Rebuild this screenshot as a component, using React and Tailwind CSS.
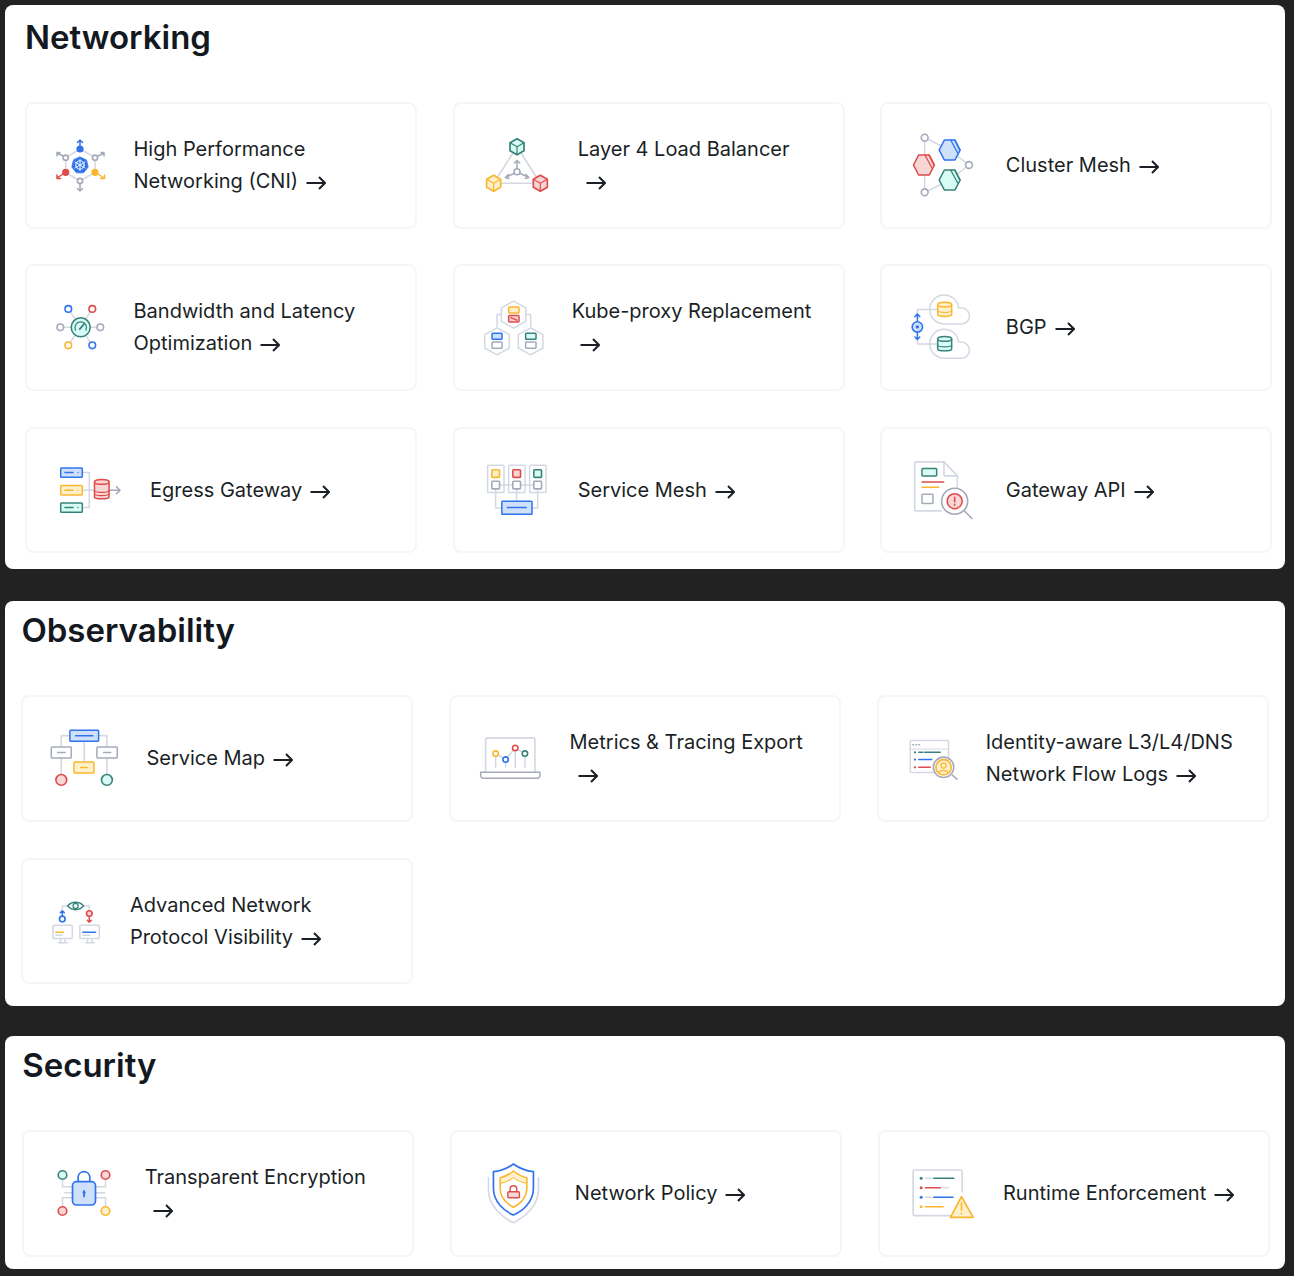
import React from 'react'

const BLUE = '#2f74ee'
const RED = '#df4b4b'
const YEL = '#fbb62f'
const GRN = '#37837a'
const GRY = '#a4aaba'
const LGT = '#d3d8e2'
const BLUE_F = '#cfe0fb'
const RED_F = '#f7d6d6'
const YEL_F = '#fff0cc'
const GRN_F = '#d8fbf6'

function Arrow() {
    return (
        <svg className="inline-block ml-2 align-[-2px]" width="20" height="14" viewBox="0 0 20 14" fill="none" stroke="#1b1f26" strokeWidth="2">
            <path d="M0.5 7H19M13 1l6 6-6 6"/>
        </svg>
    )
}

// icon svgs use page coordinates through their viewBox
function Icon({x, y, w, children}) {
    return (
        <svg className="shrink-0" width={w} height={123} viewBox={`${x} ${y} ${w} 123`} fill="none" strokeWidth="1.5" strokeLinecap="round" strokeLinejoin="round">
            {children}
        </svg>
    )
}

function Node({x, y, r = 3.3, c, f = '#fff', w = 1.6}) {
    return <circle cx={x} cy={y} r={r} stroke={c} fill={f} strokeWidth={w}/>
}

function Box({x, y, x2, y2, c, f = '#fff', w = 1.5, r = 0.8}) {
    return <rect x={x} y={y} width={x2 - x} height={y2 - y} rx={r} stroke={c} fill={f} strokeWidth={w}/>
}

function Ln({d, c = LGT, w = 1.5}) {
    return <path d={d} stroke={c} strokeWidth={w}/>
}

function Cube({x, y, c, f}) {
    const p = `${x},${y - 8} ${x + 7},${y - 4} ${x + 7},${y + 4} ${x},${y + 8} ${x - 7},${y + 4} ${x - 7},${y - 4}`
    return (
        <g>
            <polygon points={p} stroke={c} fill={f} strokeWidth="1.7"/>
            <path d={`M${x - 7} ${y - 4}L${x} ${y}L${x + 7} ${y - 4}M${x} ${y}V${y + 8}`} stroke={c} strokeWidth="1.2"/>
        </g>
    )
}

function Hex({x, y, c, f}) {
    const p = `${x - 10.5},${y} ${x - 5.3},${y - 10} ${x + 5.3},${y - 10} ${x + 10.5},${y} ${x + 5.3},${y + 10} ${x - 5.3},${y + 10}`
    return (
        <g>
            <polygon points={p} stroke={c} fill={f} strokeWidth="1.6"/>
            <path d={`M${x + 1} ${y - 10}L${x + 8} ${y + 3}M${x + 5} ${y - 10}L${x + 10} ${y}`} stroke={c} strokeWidth="1.3"/>
        </g>
    )
}

function Db({x, y, w = 7, h = 7, c, f}) {
    return (
        <g>
            <path d={`M${x - w} ${y - h + 2}V${y + h - 2}C${x - w} ${y + h + 0.5} ${x + w} ${y + h + 0.5} ${x + w} ${y + h - 2}V${y - h + 2}`} stroke={c} fill={f} strokeWidth="1.5"/>
            <ellipse cx={x} cy={y - h + 2} rx={w} ry="2.4" stroke={c} fill={f} strokeWidth="1.5"/>
            <path d={`M${x - w} ${y + 1}C${x - w} ${y + 3.5} ${x + w} ${y + 3.5} ${x + w} ${y + 1}`} stroke={c} strokeWidth="1.2"/>
        </g>
    )
}

function Cloud({y}) {
    return <path d={`M945 ${y + 14.3}H962A8 8 0 0 0 963 ${y - 1.6}L959 ${y - 1.8}A14.5 14.5 0 1 0 945 ${y + 14.3}Z`} stroke={LGT} fill="#fff" strokeWidth="1.5"/>
}

const icons = {
    cni: ({x, y, w}) => (
        <Icon x={x} y={y} w={w}>
            <polygon points="80,149 95,157.7 95,172.3 80,181 65.7,172.3 65.7,157.7" stroke={LGT}/>
            <path d="M80 146V140M77.5 142.5L80 140L82.5 142.5" stroke={BLUE}/>
            <path d="M63 156L57.5 153M60 152.5H57V156" stroke={GRY}/>
            <path d="M98 156L104 153M101 152.5H104V156" stroke={GRY}/>
            <path d="M98 174L104 178M100.5 178.5H104.5V175" stroke={YEL}/>
            <path d="M63 174L57 178M60.5 178.5H57V175" stroke={RED}/>
            <path d="M80 184V191M77.5 188.5L80 191L82.5 188.5" stroke={GRY}/>
            <Node x={80} y={149} r={2.8} c={BLUE} f={BLUE}/>
            <Node x={95} y={157.7} r={2.6} c={GRY}/>
            <Node x={95} y={172.3} r={2.8} c={YEL} f={YEL}/>
            <Node x={80} y={181} r={2.6} c={GRY}/>
            <Node x={65.7} y={172.3} r={2.8} c={RED} f={RED}/>
            <Node x={65.7} y={157.7} r={2.6} c={GRY}/>
            <polygon points="80,157 86.5,160 88.2,167 83.6,172.8 76.4,172.8 71.8,167 73.5,160" fill={BLUE} stroke={BLUE} strokeWidth="0.8"/>
            <circle cx="80" cy="165" r="4.2" stroke="#fff" strokeWidth="1"/>
            <path d="M80 159.5V170.5M75 162L85 168M85 162L75 168" stroke="#fff" strokeWidth="0.9"/>
        </Icon>
    ),
    l4: ({x, y, w}) => (
        <Icon x={x} y={y} w={w}>
            <polygon points="516.7,146.7 493.3,183.3 540,183.3" stroke={LGT} strokeWidth="1.6"/>
            <path d="M516.7 168V160.5M514 163L516.7 160.5L519.4 163" stroke={GRY}/>
            <path d="M513.5 173.5L505 177.5M508 174.5L505 177.5L508.5 178.5" stroke={GRY}/>
            <path d="M520 173.5L528.5 177.5M525.5 174.5L528.5 177.5L525 178.5" stroke={GRY}/>
            <Node x={516.7} y={171.7} r={3} c={GRY}/>
            <Cube x={516.7} y={146.7} c={GRN} f={GRN_F}/>
            <Cube x={493.3} y={183.3} c={YEL} f={YEL_F}/>
            <Cube x={540} y={183.3} c={RED} f={RED_F}/>
        </Icon>
    ),
    cluster: ({x, y, w}) => (
        <Icon x={x} y={y} w={w}>
            <Ln d="M925 137.7V192.3M925 137.7L950 150L969.3 165L950 180L925 192.3"/>
            <Node x={925} y={137.7} r={3.4} c={GRY}/>
            <Node x={969.3} y={165} r={3.4} c={GRY}/>
            <Node x={925} y={192.3} r={3.4} c={GRY}/>
            <Hex x={950} y={150} c={BLUE} f={BLUE_F}/>
            <Hex x={924.3} y={165} c={RED} f={RED_F}/>
            <Hex x={950} y={180} c={GRN} f={GRN_F}/>
        </Icon>
    ),
    bandwidth: ({x, y, w}) => (
        <Icon x={x} y={y} w={w}>
            <Ln d="M68.3 309.3L92.3 345.7M92.3 309.3L68.3 345.7M60.3 327.7H100.3"/>
            <Node x={68.3} y={309.3} c={BLUE}/>
            <Node x={92.3} y={309.3} c={RED}/>
            <Node x={60.3} y={327.7} c={GRY}/>
            <Node x={100.3} y={327.7} c={GRY}/>
            <Node x={68.3} y={345.7} c={YEL}/>
            <Node x={92.3} y={345.7} c={BLUE}/>
            <Node x={80.7} y={327.7} r={9.5} c={GRN} f={GRN_F}/>
            <path d="M75.5 330.5A5.8 5.8 0 1 1 86 330.5" stroke={GRN} strokeWidth="1.3"/>
            <path d="M79.7 329.5L84 324.5" stroke={GRN} strokeWidth="1.8"/>
        </Icon>
    ),
    kube: ({x, y, w}) => (
        <Icon x={x} y={y} w={w}>
            <Ln d="M501 315H496.7V327M525.5 315H530.3V327"/>
            <polygon points="513.3,301.5 525.5,308.3 525.5,321.7 513.3,328.5 501,321.7 501,308.3" stroke={LGT} fill="#fff"/>
            <polygon points="496.7,328.2 509,335 509,348.4 496.7,355.2 484.4,348.4 484.4,335" stroke={LGT} fill="#fff"/>
            <polygon points="530.3,328.2 542.6,335 542.6,348.4 530.3,355.2 518,348.4 518,335" stroke={LGT} fill="#fff"/>
            <Box x={508.3} y={307.3} x2={518.7} y2={313.3} c={YEL} f={YEL_F}/>
            <Box x={508.3} y={316} x2={518.7} y2={322.3} c={RED} f={RED_F}/>
            <path d="M510.5 318L516.5 320.5" stroke={RED}/>
            <Box x={491.7} y={333.7} x2={501.7} y2={339.7} c={BLUE} f={BLUE_F}/>
            <Box x={491.7} y={342.3} x2={501.7} y2={348.7} c={GRY}/>
            <Box x={525.3} y={333.7} x2={535.7} y2={339.7} c={GRN} f={GRN_F}/>
            <Box x={525.3} y={342.3} x2={535.7} y2={348.7} c={GRY}/>
        </Icon>
    ),
    bgp: ({x, y, w}) => (
        <Icon x={x} y={y} w={w}>
            <Cloud y={310}/>
            <Cloud y={344.3}/>
            <Ln d="M938 310H917.7V318M938 344.3H917.7V337"/>
            <Db x={945} y={310} c={YEL} f={YEL_F}/>
            <Db x={945} y={344.3} c={GRN} f={GRN_F}/>
            <path d="M917.7 322V314.5M915.3 317L917.7 314.5L920.1 317M917.7 333V340M915.3 337.5L917.7 340L920.1 337.5" stroke={BLUE}/>
            <Node x={917.7} y={327.3} r={5.2} c={BLUE} f={BLUE_F}/>
            <circle cx="917.7" cy="327.3" r="1.7" fill={BLUE}/>
        </Icon>
    ),
    egress: ({x, y, w}) => (
        <Icon x={x} y={y} w={w}>
            <Ln d="M82.3 472.3H89.3V507.3H82.3M82.3 490H95"/>
            <path d="M109.5 490H120M116.5 486.5L120 490L116.5 493.5" stroke={GRY} strokeWidth="1.6"/>
            <Box x={60.7} y={467.7} x2={82.3} y2={477} c={BLUE} f={BLUE_F}/>
            <Box x={60.7} y={485.3} x2={82.3} y2={494.7} c={YEL} f={YEL_F}/>
            <Box x={60.7} y={502.7} x2={82.3} y2={512} c={GRN} f={GRN_F}/>
            <path d="M65 472.3H73" stroke={BLUE}/><path d="M65 490H73" stroke={YEL}/><path d="M65 507.3H73" stroke={GRN}/>
            <circle cx="78" cy="472.3" r="0.7" fill={BLUE}/><circle cx="78" cy="490" r="0.7" fill={YEL}/><circle cx="78" cy="507.3" r="0.7" fill={GRN}/>
            <Db x={101.8} y={489.2} w={7.3} h={9.5} c={RED} f={RED_F}/>
            <path d="M94.5 493.5C94.5 496 109 496 109 493.5" stroke={RED} strokeWidth="1.2"/>
        </Icon>
    ),
    mesh: ({x, y, w}) => (
        <Icon x={x} y={y} w={w}>
            <Box x={487.3} y={465} x2={503.7} y2={492.3} c={LGT}/>
            <Box x={508.3} y={465} x2={524.7} y2={492.3} c={LGT}/>
            <Box x={529.3} y={465} x2={545.7} y2={492.3} c={LGT}/>
            <Ln d="M495.3 484.7H537.3M495.3 489V507.7H502M516.3 489V501M537.3 489V507.7H531"/>
            <Box x={491.5} y={469.5} x2={499.2} y2={477.2} c={YEL} f={YEL_F} w={1.6}/>
            <Box x={512.5} y={469.5} x2={520.2} y2={477.2} c={RED} f={RED_F} w={1.6}/>
            <Box x={533.5} y={469.5} x2={541.2} y2={477.2} c={GRN} f={GRN_F} w={1.6}/>
            <Box x={491.5} y={481} x2={499.2} y2={488.7} c={GRY} w={1.6}/>
            <Box x={512.5} y={481} x2={520.2} y2={488.7} c={GRY} w={1.6}/>
            <Box x={533.5} y={481} x2={541.2} y2={488.7} c={GRY} w={1.6}/>
            <Box x={501.5} y={501} x2={531.7} y2={514} c={BLUE} f={BLUE_F}/>
            <path d="M507 507.4H526" stroke={BLUE}/>
        </Icon>
    ),
    gateway: ({x, y, w}) => (
        <Icon x={x} y={y} w={w}>
            <path d="M957.7 488V475.7L944.3 461.7H916.5Q915 461.7 915 463.2V509Q915 510.7 916.5 510.7H941.5" stroke={LGT} strokeWidth="1.6"/>
            <path d="M944.3 461.7V474Q944.3 475.7 946 475.7H957.7" stroke={LGT} strokeWidth="1.6"/>
            <Box x={922.3} y={468.3} x2={937} y2={475.7} c={GRN} f={GRN_F}/>
            <path d="M922.3 481.7H944" stroke={RED}/>
            <path d="M922.3 487H939" stroke={YEL}/>
            <Box x={922.3} y={494} x2={933.3} y2={503.3} c={GRY}/>
            <path d="M965 511L972.3 518.3" stroke={GRY} strokeWidth="1.6"/>
            <Node x={955} y={501} r={13} c={GRY}/>
            <Node x={955} y={501} r={7.5} c={RED} f={RED_F}/>
            <path d="M955 497V501.5M955 504V505" stroke={RED} strokeWidth="1.6"/>
        </Icon>
    ),
    serviceMap: ({x, y, w}) => (
        <Icon x={x} y={y} w={w}>
            <Ln d="M70.3 736H61.7V747.3M99 736H107.3V747.3M84.7 741.7V762.3M61.7 758.3V775M107.3 758.3V775" w={1.6}/>
            <Box x={70.3} y={730.7} x2={99} y2={741.7} c={BLUE} f={BLUE_F}/>
            <path d="M76 736.2H93.3" stroke={BLUE}/>
            <Box x={51.7} y={747.3} x2={71.7} y2={758.3} c={GRY}/>
            <path d="M58 753H65.5" stroke={GRY}/>
            <Box x={97.3} y={747.3} x2={117.7} y2={758.3} c={GRY}/>
            <path d="M104 753H111" stroke={GRY}/>
            <Box x={74.3} y={762.3} x2={94.3} y2={773.3} c={YEL} f={YEL_F}/>
            <path d="M81 768H87.5" stroke={YEL}/>
            <Node x={61.7} y={780.3} r={5.4} c={RED} f={RED_F}/>
            <Node x={107.3} y={780.3} r={5.4} c={GRN} f={GRN_F}/>
        </Icon>
    ),
    metrics: ({x, y, w}) => (
        <Icon x={x} y={y} w={w}>
            <path d="M485.7 771.7V740Q485.7 738.3 487.4 738.3H533.3Q535 738.3 535 740V771.7" stroke={LGT} strokeWidth="1.6"/>
            <path d="M480.7 772.7H540V775.5Q540 778.7 537 778.7H484Q480.7 778.7 480.7 775.5Z" stroke={GRY} fill="#fff" strokeWidth="1.4"/>
            <Ln d="M495.7 754V767.7M505.7 760V767.7M515.3 748.3V767.7M525 754V767.7M495.7 754L505.7 760L515.3 748.3L525 754"/>
            <Node x={495.7} y={754} r={2.7} c={YEL}/>
            <Node x={505.7} y={760} r={2.7} c={BLUE}/>
            <Node x={515.3} y={748.3} r={2.7} c={RED}/>
            <Node x={525} y={754} r={2.7} c={GRN}/>
        </Icon>
    ),
    identity: ({x, y, w}) => (
        <Icon x={x} y={y} w={w}>
            <path d="M936 773H911Q910 773 910 772V742Q910 741 911 741H947.3Q948.3 741 948.3 742V757" stroke={LGT}/>
            <path d="M910 749.5H948.3" stroke={LGT} strokeWidth="1"/>
            <path d="M912.5 745.2H913.2M915.5 745.2H916.2M918.5 745.2H919.2" stroke={GRY}/>
            <circle cx="914.7" cy="752.7" r="1.1" fill={GRN}/><path d="M918.5 752.7H922.5M924.3 752.7H940" stroke={GRN}/>
            <circle cx="914.7" cy="760" r="1.1" fill={BLUE}/><path d="M918.5 760H931.5" stroke={BLUE}/>
            <circle cx="914.7" cy="767.7" r="1.1" fill={RED}/><path d="M918.5 767.7H930" stroke={RED}/>
            <path d="M952 775.5L956.7 779.5" stroke={GRY}/>
            <Node x={943.3} y={767.7} r={10.2} c={GRY}/>
            <Node x={943.3} y={767.7} r={7.7} c={YEL} f={YEL_F}/>
            <circle cx="943.3" cy="766" r="2.5" stroke={YEL} strokeWidth="1.2"/>
            <path d="M938.8 773C939.5 770 947 770 947.8 773" stroke={YEL} strokeWidth="1.2"/>
        </Icon>
    ),
    protocol: ({x, y, w}) => (
        <Icon x={x} y={y} w={w}>
            <Ln d="M68.3 905.7H62.7V910M83.7 905.7H89.7V910"/>
            <path d="M68 905.7C72 900.7 80 900.7 84 905.7C80 910.7 72 910.7 68 905.7Z" stroke={GRN} fill="#fff"/>
            <Node x={76} y={905.7} r={2.6} c={GRN} f={GRN_F} w={1.2}/>
            <path d="M62.7 915.5V910.5M60.7 912.5L62.7 910.5L64.7 912.5" stroke={BLUE}/>
            <Node x={62.7} y={918.7} r={2.8} c={BLUE}/>
            <path d="M89.7 916V922M87.7 920L89.7 922L91.7 920" stroke={RED}/>
            <Node x={89.7} y={913.3} r={2.8} c={RED} f={RED_F}/>
            <Box x={53.3} y={925} x2={72.7} y2={938.3} c={LGT}/>
            <Box x={80.3} y={925} x2={99.7} y2={938.3} c={LGT}/>
            <path d="M61 938.5V942M65.5 938.5V942M59 942.5H67.5M88 938.5V942M92.5 938.5V942M86 942.5H94.5" stroke={LGT}/>
            <path d="M56.3 932H64" stroke={YEL} strokeWidth="1.6"/>
            <path d="M56.3 935H62.5" stroke={LGT}/>
            <path d="M83.3 932H96" stroke={BLUE} strokeWidth="1.6"/>
            <path d="M83.3 935H90" stroke={LGT}/>
        </Icon>
    ),
    encryption: ({x, y, w}) => (
        <Icon x={x} y={y} w={w}>
            <Ln d="M62.7 1180V1186.7H72.7M105.7 1180V1186.7H95.7M65 1192.7H72.7M95.7 1192.7H105M72.7 1197.7H62.7V1206M95.7 1197.7H105.7V1206"/>
            <Node x={62.7} y={1175} r={4.3} c={GRN} f={GRN_F}/>
            <Node x={105.7} y={1175} r={4.3} c={RED} f={RED_F}/>
            <Node x={62.7} y={1211} r={4.3} c={RED} f={RED_F}/>
            <Node x={105.7} y={1211} r={4.3} c={YEL} f={YEL_F}/>
            <path d="M78.3 1181.7V1176.7A5.9 5.9 0 0 1 90 1176.7V1181.7" stroke={BLUE} strokeWidth="1.7"/>
            <rect x="72.7" y="1181.7" width="23" height="23.3" rx="4" stroke={BLUE} fill={BLUE_F} strokeWidth="1.7"/>
            <path d="M84.3 1191V1196.5" stroke={BLUE} strokeWidth="1.8"/>
            <circle cx="84.3" cy="1192.5" r="1.5" fill={BLUE}/>
        </Icon>
    ),
    policy: ({x, y, w}) => (
        <Icon x={x} y={y} w={w}>
            <path d="M488.3 1177.7V1190C488.3 1206 503 1218 513.3 1222.7C523.6 1218 538.3 1206 538.3 1190V1177.7" stroke={LGT} strokeWidth="1.6"/>
            <path d="M513.3 1164C507 1168.5 500 1171 493.3 1171.7V1188C493.3 1202 504 1211 513.3 1215C522.6 1211 533.3 1202 533.3 1188V1171.7C526.6 1171 519.6 1168.5 513.3 1164Z" stroke={BLUE} fill="#fff" strokeWidth="1.7"/>
            <path d="M513.3 1171C509 1174.5 504 1177 500 1177.7V1183.3C505 1182.5 509.5 1180.5 513.3 1177.7C517 1180.5 521.7 1182.5 526.7 1183.3V1177.7C522.7 1177 517.6 1174.5 513.3 1171Z" fill={YEL_F}/>
            <path d="M513.3 1171C509 1174.5 504 1177 500 1177.7V1188C500 1197.5 507 1204 513.3 1207.3C519.6 1204 526.7 1197.5 526.7 1188V1177.7C522.7 1177 517.6 1174.5 513.3 1171Z" stroke={YEL} strokeWidth="1.6"/>
            <path d="M500 1183.3C505 1182.5 509.5 1180.5 513.3 1177.7C517 1180.5 521.7 1182.5 526.7 1183.3" stroke={YEL} strokeWidth="1"/>
            <path d="M510 1191.7V1189A3.3 3.3 0 0 1 516.6 1189V1191.7" stroke={RED} strokeWidth="1.4"/>
            <rect x="507.7" y="1191.7" width="11.6" height="6" rx="1" stroke={RED} fill={RED_F} strokeWidth="1.4"/>
        </Icon>
    ),
    runtime: ({x, y, w}) => (
        <Icon x={x} y={y} w={w}>
            <path d="M961.7 1191.7V1171.5Q961.7 1170 960.2 1170H914.2Q912.7 1170 912.7 1171.5V1214.2Q912.7 1215.7 914.2 1215.7H950" stroke={LGT} strokeWidth="1.7"/>
            <circle cx="920.7" cy="1178.3" r="1.5" fill={GRN}/><path d="M925 1178.3H931" stroke={LGT}/><path d="M933.3 1178.3H953.3" stroke={GRN} strokeWidth="1.6"/>
            <circle cx="920.7" cy="1187.7" r="1.5" fill={RED}/><path d="M925 1187.7H940" stroke={RED} strokeWidth="1.6"/><path d="M942.3 1187.7H947.7" stroke={LGT}/>
            <circle cx="920.7" cy="1197.3" r="1.5" fill={BLUE}/><path d="M925 1197.3H931" stroke={LGT}/><path d="M933.3 1197.3H952.5" stroke={BLUE} strokeWidth="1.6"/>
            <circle cx="920.7" cy="1206.7" r="1.5" fill={YEL}/><path d="M925 1206.7H942.7" stroke={YEL} strokeWidth="1.6"/>
            <polygon points="961,1196.7 972.7,1217.3 950,1217.3" stroke={YEL} fill={YEL_F} strokeWidth="1.7"/>
            <path d="M961 1203V1210.5M961 1213.3V1214" stroke={YEL} strokeWidth="1.6"/>
        </Icon>
    ),
}

const sections = [
    {
        title: 'Networking', pad: 'pt-[11px] pb-[15.6px] pl-[20px] mb-[32px]', head: 'mb-[43px]',
        xs: [25, 452.67, 880.33],
        ys: [102, 264.4, 426.8],
        items: [
            {k: 'cni', t: ['High Performance', 'Networking (CNI)'], off: 106.5},
            {k: 'l4', t: ['Layer 4 Load Balancer', ''], off: 123},
            {k: 'cluster', t: ['Cluster Mesh'], off: 123.5},
            {k: 'bandwidth', t: ['Bandwidth and Latency', 'Optimization'], off: 106.5},
            {k: 'kube', t: ['Kube-proxy Replacement', ''], off: 117},
            {k: 'bgp', t: ['BGP'], off: 123.5},
            {k: 'egress', t: ['Egress Gateway'], off: 123},
            {k: 'mesh', t: ['Service Mesh'], off: 123},
            {k: 'gateway', t: ['Gateway API'], off: 123.5},
        ],
    },
    {
        title: 'Observability', pad: 'pt-[8px] pb-[21.6px] pl-[16.4px] mb-[30px]', head: 'mb-[43.4px]',
        xs: [21.4, 449.07, 876.73],
        ys: [695.4, 857.8],
        items: [
            {k: 'serviceMap', t: ['Service Map'], off: 123},
            {k: 'metrics', t: ['Metrics & Tracing Export', ''], off: 118.5},
            {k: 'identity', t: ['Identity-aware L3/L4/DNS', 'Network Flow Logs'], off: 107},
            {k: 'protocol', t: ['Advanced Network', 'Protocol Visibility'], off: 106.5},
        ],
    },
    {
        title: 'Security', pad: 'pt-[8px] pb-[12.4px] pl-[17.2px]', head: 'mb-[43px]',
        xs: [22.2, 449.87, 877.53],
        ys: [1130],
        items: [
            {k: 'encryption', t: ['Transparent Encryption', ''], off: 120.5},
            {k: 'policy', t: ['Network Policy'], off: 123},
            {k: 'runtime', t: ['Runtime Enforcement'], off: 123.5},
        ],
    },
]

function Card({item, x, y}) {
    const Ico = icons[item.k]
    return (
        <div className="h-[126.6px] flex items-center rounded-lg border-2 border-[#f5f6f7] bg-white">
            <Ico x={x + 2} y={y + 2} w={item.off}/>
            <div className="pb-[1px] text-[20px] leading-[32px] text-[#1b1f26] whitespace-nowrap">
                {item.t.map((line, i) => (
                    <div key={i} className="min-h-[32px]">
                        {line}
                        {i === item.t.length - 1 && <Arrow/>}
                    </div>
                ))}
            </div>
        </div>
    )
}

export default function App() {
    return (
        <div className="min-h-[1276px] bg-[#222222] px-[5px] pt-[5px] font-['Inter',sans-serif] flex flex-col">
            {sections.map(s => (
                <section key={s.title} className={`bg-white rounded-lg w-[1280px] ${s.pad}`}>
                    <h2 className={`text-[33px] leading-[43px] font-semibold text-[#14181f] ${s.head}`}>{s.title}</h2>
                    <div className="grid grid-cols-[repeat(3,392px)] gap-x-[35.67px] gap-y-[35.8px]">
                        {s.items.map((item, i) => (
                            <Card key={item.k} item={item} x={s.xs[i % 3]} y={s.ys[Math.floor(i / 3)]}/>
                        ))}
                    </div>
                </section>
            ))}
        </div>
    )
}
